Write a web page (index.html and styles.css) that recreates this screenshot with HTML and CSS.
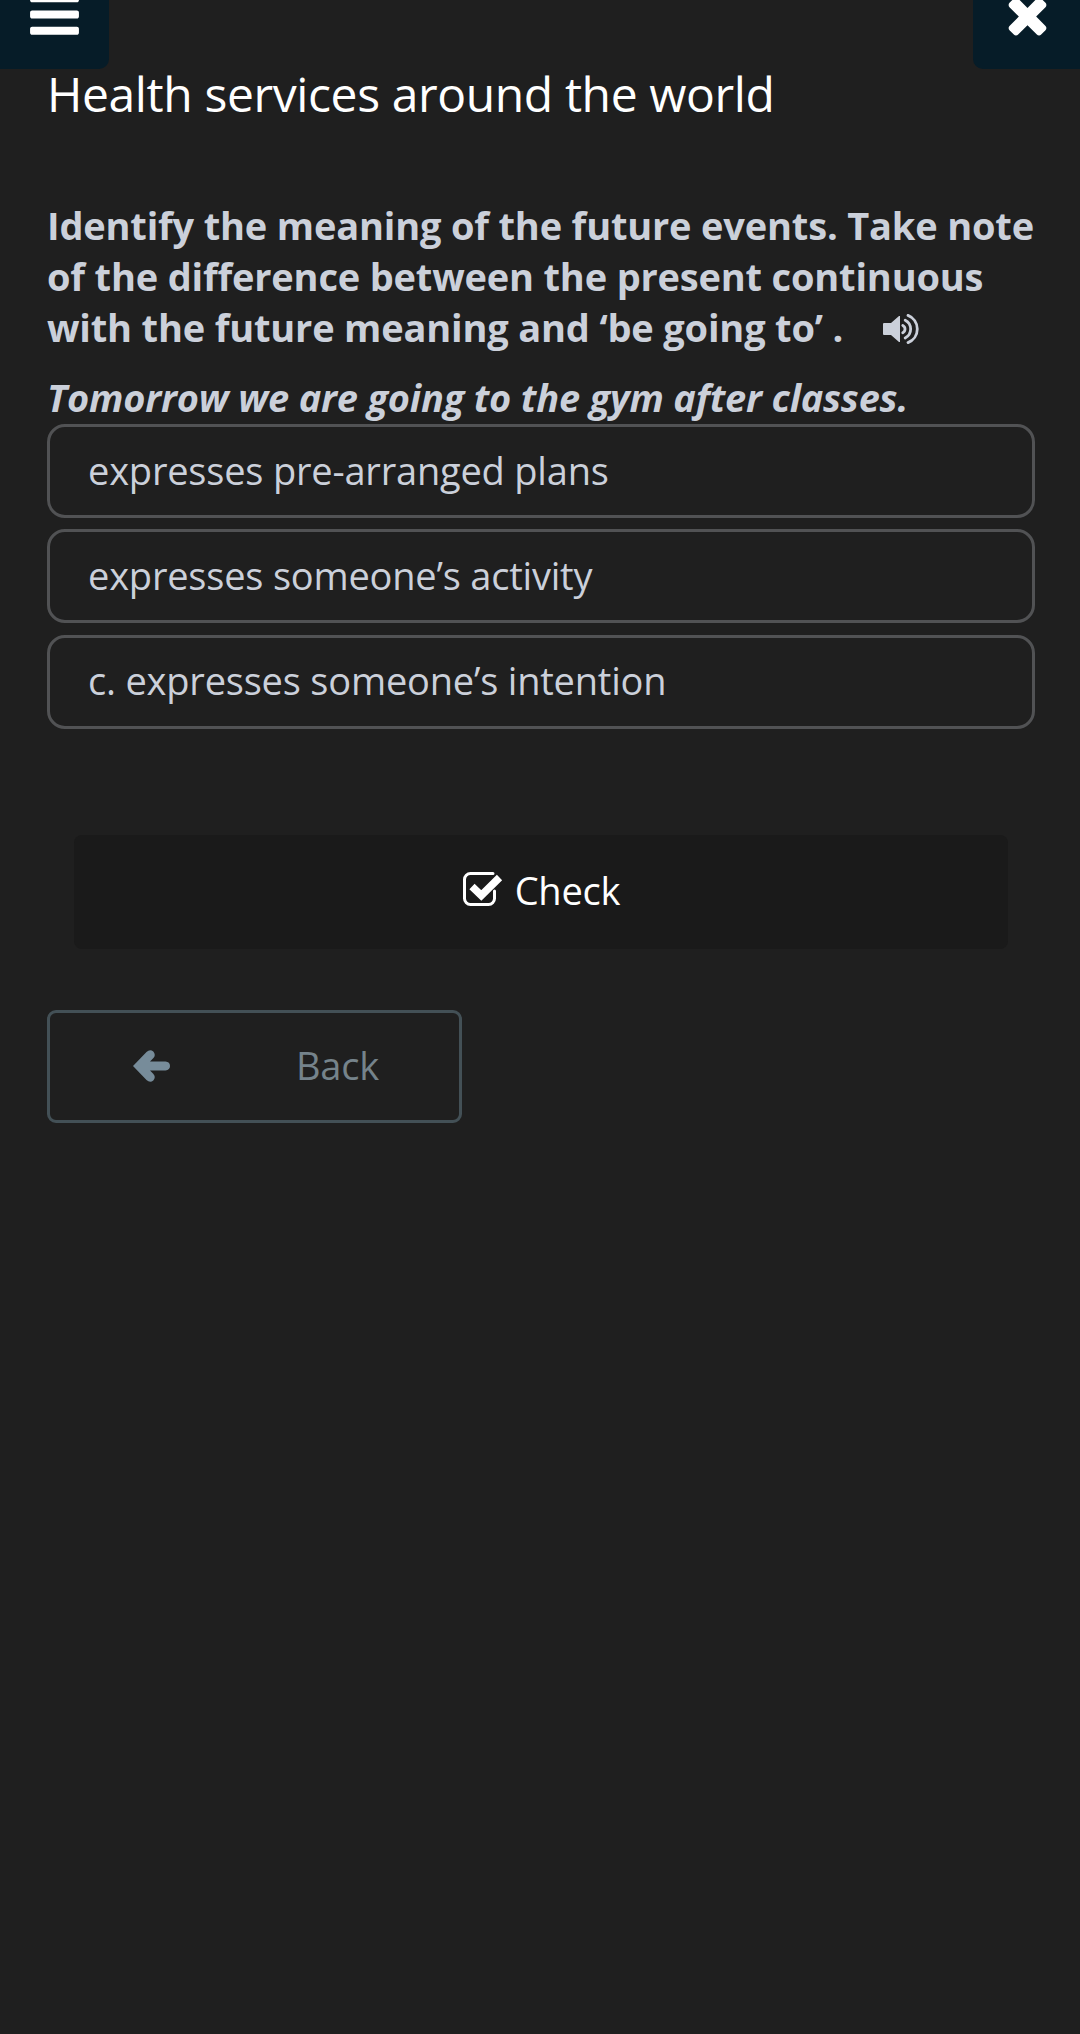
FILE: index.html
```
<!DOCTYPE html>
<html lang="en">
<head>
    <meta charset="UTF-8">
    <meta name="viewport" content="width=device-width, initial-scale=1.0">
    <title>Health services around the world</title>
    <link rel="stylesheet" href="styles.css">
</head>
<body>
    <header class="topbar">
        <button class="top-btn menu-btn" aria-label="Menu">
            <svg class="top-icon" viewBox="0 0 1792 1792"><path d="M1664 1344v128q0 26-19 45t-45 19h-1408q-26 0-45-19t-19-45v-128q0-26 19-45t45-19h1408q26 0 45 19t19 45zm0-512v128q0 26-19 45t-45 19h-1408q-26 0-45-19t-19-45v-128q0-26 19-45t45-19h1408q26 0 45 19t19 45zm0-512v128q0 26-19 45t-45 19h-1408q-26 0-45-19t-19-45v-128q0-26 19-45t45-19h1408q26 0 45 19t19 45z"/></svg>
        </button>
        <button class="top-btn close-btn" aria-label="Close">
            <svg class="top-icon" viewBox="0 0 1792 1792"><path d="M1490 1322q0 40-28 68l-136 136q-28 28-68 28t-68-28l-294-294-294 294q-28 28-68 28t-68-28l-136-136q-28-28-28-68t28-68l294-294-294-294q-28-28-28-68t28-68l136-136q28-28 68-28t68 28l294 294 294-294q28-28 68-28t68 28l136 136q28 28 28 68t-28 68l-294 294 294 294q28 28 28 68z"/></svg>
        </button>
    </header>

    <main class="lesson">
        <h1>Health services around the world</h1>

        <div class="question">
            <p>Identify the meaning of the future events. Take note<br>
            of the difference between the present continuous<br>
            with the future meaning and ‘be going to’ .<svg class="sound-icon" viewBox="0 0 36 30"><path class="fill" d="M1 9h7l8-7h1v26h-1l-8-7H1q-1 0-1-1V10q0-1 1-1z"/><path class="wave" d="M19.8 11.4a4.2 4.2 0 0 1 0 7.4M22.2 6.2a10 10 0 0 1 0 17.8M25 1.4a14.6 14.6 0 0 1 0 27.2"/></svg></p>
            <p class="example">Tomorrow we are going to the gym after classes.</p>
        </div>

        <div class="options">
            <button class="option">expresses pre-arranged plans</button>
            <button class="option">expresses someone’s activity</button>
            <button class="option">c. expresses someone’s intention</button>
        </div>

        <button class="check-btn">
            <svg class="check-icon" viewBox="0 0 40 34"><path class="box" d="M30 1.5H7.5a6 6 0 0 0-6 6v19a6 6 0 0 0 6 6h18a6 6 0 0 0 6-6v-7.5"/><path class="tick" d="M9 14.5l9.3 9L36.5 5.5"/></svg>
            <span>Check</span>
        </button>

        <button class="back-btn">
            <svg class="back-icon" viewBox="0 0 37 32"><path d="M0 16L13.500 2.100Q17 -1.200 20.300 1.600Q23.300 5 20.200 8.300L17 11.600H32.500Q37 12 37 16Q37 20 32.500 20.400H17L20.200 23.700Q23.300 27 20.300 30.400Q17 33.200 13.500 29.900Z"/></svg>
            <span>Back</span>
        </button>
    </main>
</body>
</html>
```
FILE: styles.css
```
* {
    box-sizing: border-box;
}
body {
    margin: 0;
    min-height: 100vh;
    background-color: #1f1f1f;
    color: #cbd0da;
    font-family: 'Open Sans', 'Noto Sans', sans-serif;
    font-size: 38px;
    line-height: 51px;
    letter-spacing: -0.2px;
}
button {
    margin: 0;
    background: none;
    border: none;
    color: inherit;
    font: inherit;
    letter-spacing: inherit;
    cursor: pointer;
}
svg {
    display: block;
    flex: none;
}
.topbar {
    display: flex;
    justify-content: space-between;
    height: 69px;
}
.top-btn {
    display: flex;
    align-items: flex-end;
    height: 69px;
    padding: 0 0 26px 26px;
    background-color: #061c28;
}
.menu-btn {
    width: 109px;
    border-radius: 0 0 10px 0;
}
.close-btn {
    width: 107px;
    border-radius: 0 0 0 10px;
}
.top-icon {
    width: 57px;
    height: 57px;
    fill: #fff;
}
.lesson {
    padding: 0 45px 0 47px;
}
h1 {
    margin: -5px 0 0;
    color: #fff;
    font-size: 48px;
    font-weight: 400;
    line-height: 60px;
    letter-spacing: -0.39px;
}
.question {
    margin-top: 76px;
    font-weight: 700;
    letter-spacing: -0.18px;
    white-space: nowrap;
}
.question p {
    margin: 0;
}
.question .example {
    margin-top: 19px;
    font-style: italic;
    letter-spacing: -0.2px;
}
.sound-icon {
    display: inline-block;
    width: 36px;
    height: 30px;
    margin-left: 40px;
    vertical-align: -2px;
}
.sound-icon .fill {
    fill: #cbd0da;
}
.sound-icon .wave {
    fill: none;
    stroke: #cbd0da;
    stroke-width: 2.8;
    stroke-linecap: round;
}
.options {
    display: flex;
    flex-direction: column;
    gap: 11.4px;
    margin-top: 1.1px;
}
.option {
    height: 94px;
    padding: 0 38px 2.2px;
    border: 3px solid #515254;
    border-radius: 18px;
    text-align: left;
}
.check-btn {
    display: flex;
    align-items: center;
    justify-content: center;
    gap: 12px;
    width: 934px;
    height: 114px;
    margin: 105.9px auto 0;
    padding: 0 0 2px 1px;
    border-radius: 8px;
    background-color: #1a1a1a;
    color: #fff;
}
.check-icon {
    width: 40px;
    height: 34px;
    margin-top: -4px;
}
.check-icon path {
    fill: none;
    stroke: #fff;
}
.check-icon .box {
    stroke-width: 3;
    stroke-linecap: round;
}
.check-icon .tick {
    stroke-width: 7.5;
}
.back-btn {
    display: flex;
    align-items: center;
    gap: 126px;
    width: 415px;
    height: 113px;
    margin-top: 61px;
    padding: 0 0 1px 83px;
    border: 3px solid #435056;
    border-radius: 9px;
    color: #75838b;
}
.back-icon {
    width: 37px;
    height: 32px;
    fill: #778c9a;
}
```
